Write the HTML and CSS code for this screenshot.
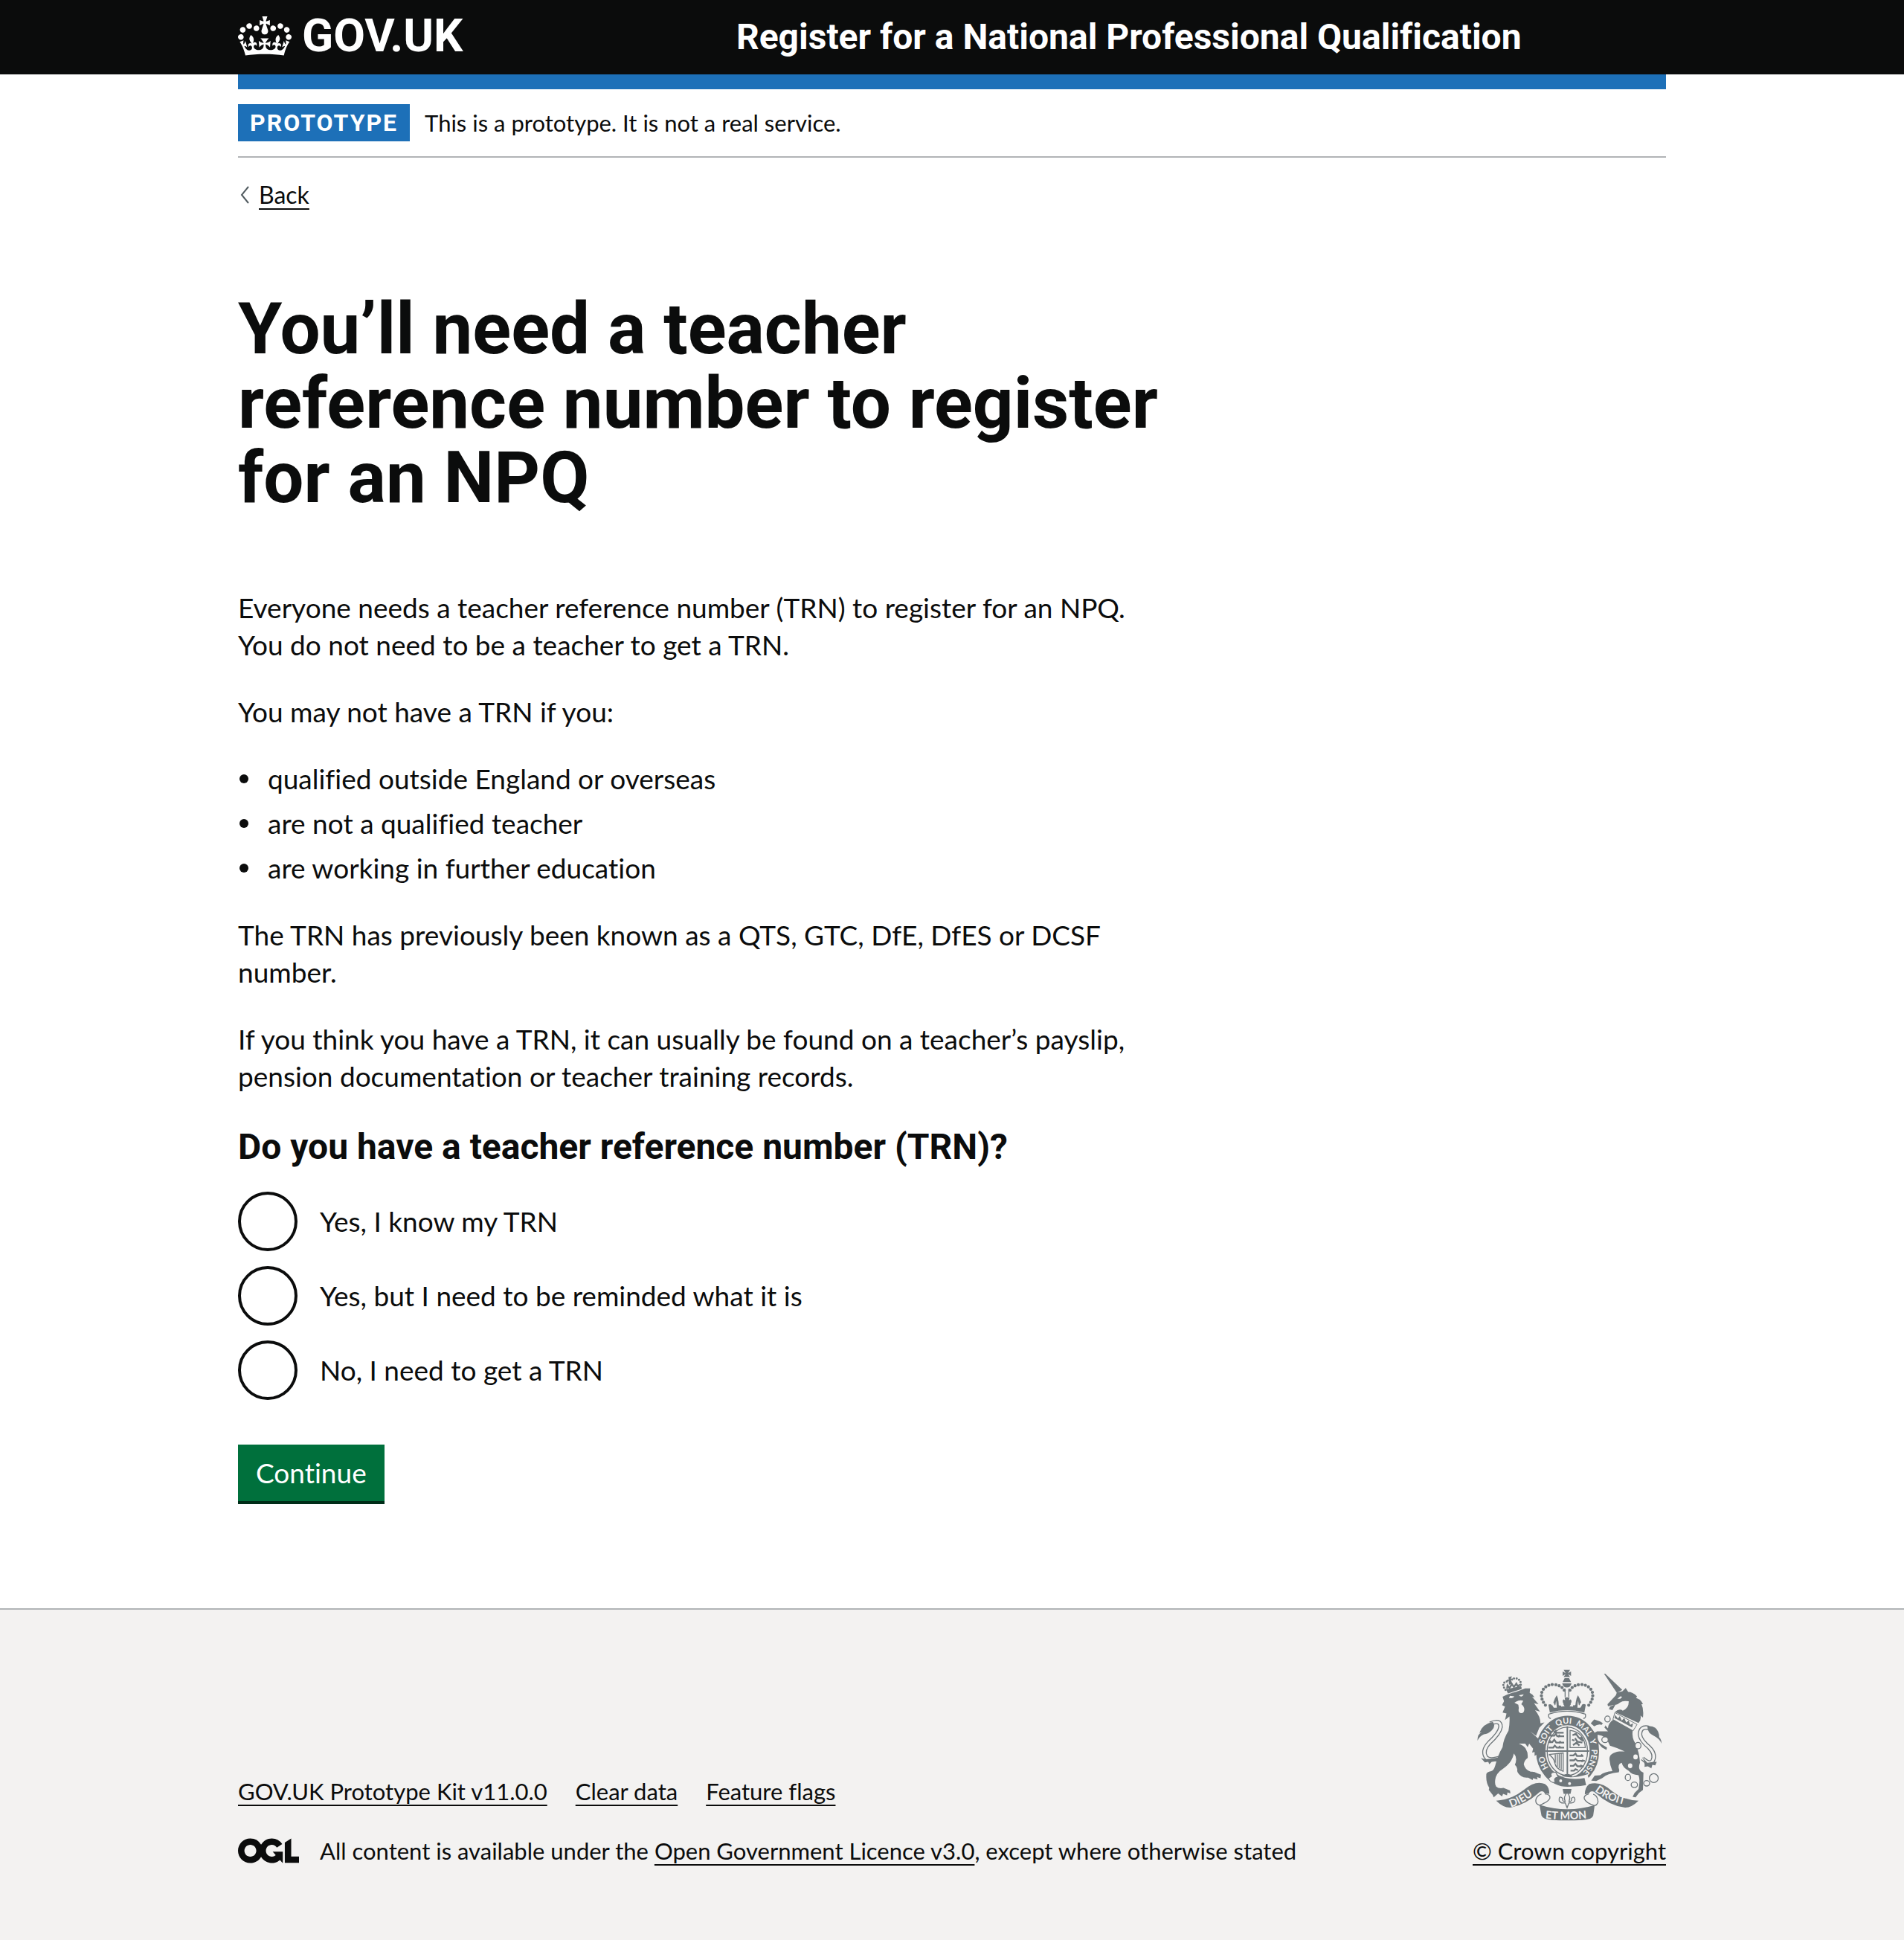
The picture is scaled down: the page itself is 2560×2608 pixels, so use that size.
FILE: index.html
```html
<!DOCTYPE html>
<html lang="en">
<head>
<meta charset="utf-8">
<title>Register for a National Professional Qualification</title>
<meta name="viewport" content="width=device-width, initial-scale=1">
<link rel="stylesheet" href="styles.css">
</head>
<body>
<header class="header">
  <div class="container header-inner">
    <a class="logo" href="#">
      <svg class="logo-crown" viewBox="0 0 132 97" aria-hidden="true"><path fill="currentColor" fill-rule="evenodd" d="M25 30.2c3.5 1.5 7.7-.2 9.1-3.7 1.5-3.6-.2-7.8-3.9-9.2-3.6-1.4-7.6.3-9.1 3.9-1.4 3.5.3 7.5 3.9 9zM9 39.5c3.6 1.5 7.8-.2 9.2-3.7 1.5-3.6-.2-7.8-3.9-9.1-3.6-1.5-7.6.2-9.1 3.8-1.4 3.5.3 7.5 3.8 9zM4.4 57.2c3.5 1.5 7.7-.2 9.1-3.8 1.5-3.6-.2-7.7-3.9-9.1-3.5-1.5-7.6.3-9.1 3.8-1.4 3.5.3 7.6 3.9 9.1zm38.3-21.4c3.5 1.5 7.7-.2 9.1-3.8 1.5-3.6-.2-7.7-3.9-9.1-3.6-1.5-7.6.3-9.1 3.8-1.3 3.6.4 7.7 3.9 9.1zm64.4-5.6c-3.6 1.5-7.8-.2-9.1-3.7-1.5-3.6.2-7.8 3.8-9.2 3.6-1.4 7.7.3 9.2 3.9 1.3 3.5-.4 7.5-3.9 9zm15.9 9.3c-3.6 1.5-7.7-.2-9.1-3.7-1.5-3.6.2-7.8 3.7-9.1 3.6-1.5 7.7.2 9.2 3.8 1.5 3.5-.3 7.5-3.8 9zm4.7 17.7c-3.6 1.5-7.8-.2-9.2-3.8-1.5-3.6.2-7.7 3.9-9.1 3.6-1.5 7.7.3 9.2 3.8 1.3 3.5-.4 7.6-3.9 9.1zM89.3 35.8c-3.6 1.5-7.8-.2-9.2-3.8-1.4-3.6.2-7.7 3.9-9.1 3.6-1.5 7.7.3 9.2 3.8 1.4 3.6-.3 7.7-3.9 9.1zM69.7 17.7l8.9 4.7V9.3l-8.9 2.8c-.2-.3-.5-.6-.9-.9L72.4 0H59.6l3.5 11.2c-.3.3-.6.5-.9.9l-8.8-2.8v13.1l8.8-4.7c.3.3.6.7.9.9l-5 15.4v.1c-.2.8-.4 1.6-.4 2.4 0 4.1 3.1 7.5 7 8.1h.2c.3 0 .7.1 1 .1.4 0 .7 0 1-.1h.2c4-.6 7.1-4.1 7.1-8.1 0-.8-.1-1.7-.4-2.4V34l-5.1-15.4c.4-.2.7-.6 1-.9zM66 92.8c16.9 0 32.8 1.1 47.1 3.2 4-16.9 8.9-26.7 14-33.5l-9.6-3.4c1 4.9 1.1 7.2 0 10.2-1.5-1.4-3-4.3-4.2-8.7L108.6 76c2.8-2 5-3.2 7.5-3.3-4.4 9.4-10 11.9-13.6 11.2-4.3-.8-6.3-4.6-5.6-7.9 1-4.7 5.7-5.9 8-.5 4.3-8.7-3-11.4-7.6-8.8 7.1-7.2 7.9-13.5 2.1-21.1-8 6.1-8.1 12.3-4.5 20.8-4.7-5.4-12.1-2.5-9.5 6.2 3.4-5.2 7.9-2 7.2 3.1-.6 4.3-6.4 7.8-13.5 7.2-10.3-.9-10.9-8-11.2-13.8 2.5-.5 7.1 1.8 11 7.3L80.2 60c-4.1 4.4-8 5.3-12.3 5.4 1.4-4.4 8-11.6 8-11.6H55.5s6.4 7.2 7.9 11.6c-4.2-.1-8-1-12.3-5.4l1.4 16.4c3.9-5.5 8.5-7.7 10.9-7.3-.3 5.8-.9 12.8-11.1 13.8-7.2.6-12.9-2.9-13.5-7.2-.7-5 3.8-8.3 7.1-3.1 2.7-8.7-4.6-11.6-9.4-6.2 3.7-8.5 3.6-14.7-4.6-20.8-5.8 7.6-5 13.9 2.2 21.1-4.7-2.6-11.9.1-7.7 8.8 2.3-5.5 7.1-4.2 8.1.5.7 3.3-1.3 7.1-5.7 7.9-3.5.7-9-1.8-13.5-11.2 2.5.1 4.7 1.3 7.5 3.3l-4.7-15.4c-1.2 4.4-2.7 7.2-4.3 8.7-1.1-3-.9-5.3 0-10.2l-9.5 3.4c5 6.9 9.9 16.7 14 33.5 14.8-2.1 30.8-3.2 47.7-3.2z"/></svg>
      <span>GOV.UK</span>
    </a>
    <a class="service-name" href="#">Register for a National Professional Qualification</a>
  </div>
</header>
<div class="container">
  <div class="blue-bar"></div>
  <div class="phase-banner">
    <strong class="tag">PROTOTYPE</strong>
    <span>This is a prototype. It is not a real service.</span>
  </div>
  <a class="back-link" href="#">
    <svg class="chevron" viewBox="0 0 12 24" aria-hidden="true"><path d="M11 1 2 12l9 11" fill="none" stroke="#505a5f" stroke-width="2"/></svg>
    <span class="underlined">Back</span>
  </a>
  <main class="main">
    <h1>You’ll need a teacher reference number to register for an NPQ</h1>
    <p>Everyone needs a teacher reference number (TRN) to register for an NPQ. You do not need to be a teacher to get a TRN.</p>
    <p>You may not have a TRN if you:</p>
    <ul class="bullets">
      <li>qualified outside England or overseas</li>
      <li>are not a qualified teacher</li>
      <li>are working in further education</li>
    </ul>
    <p>The TRN has previously been known as a QTS, GTC, DfE, DfES or DCSF number.</p>
    <p>If you think you have a TRN, it can usually be found on a teacher’s payslip, pension documentation or teacher training records.</p>
    <form>
      <fieldset>
        <legend>Do you have a teacher reference number (TRN)?</legend>
        <div class="radios">
          <div class="radio"><input type="radio" name="trn" id="trn-yes" value="yes"><label for="trn-yes">Yes, I know my TRN</label></div>
          <div class="radio"><input type="radio" name="trn" id="trn-reminder" value="reminder"><label for="trn-reminder">Yes, but I need to be reminded what it is</label></div>
          <div class="radio"><input type="radio" name="trn" id="trn-no" value="no"><label for="trn-no">No, I need to get a TRN</label></div>
        </div>
      </fieldset>
      <button class="button" type="button">Continue</button>
    </form>
  </main>
</div>
<footer class="footer">
  <div class="container footer-inner">
    <div class="footer-meta">
      <nav class="footer-links">
        <a class="underlined" href="#">GOV.UK Prototype Kit v11.0.0</a>
        <a class="underlined" href="#">Clear data</a>
        <a class="underlined" href="#">Feature flags</a>
      </nav>
      <div class="licence">
        <svg class="ogl" viewBox="0 0 483.2 195.7" aria-hidden="true"><path fill="currentColor" d="M421.5 142.8V.1l-50.7 32.3v161.1h112.4v-50.7zm-122.3-9.6A47.12 47.12 0 0 1 221 97.8c0-26 21.1-47.1 47.1-47.1 16.7 0 31.4 8.7 39.7 21.8l42.7-27.2A97.63 97.63 0 0 0 268.1 0c-36.5 0-68.3 20.1-85.1 49.7A98 98 0 0 0 97.8 0C43.9 0 0 43.9 0 97.8s43.9 97.8 97.8 97.8c36.5 0 68.3-20.1 85.1-49.7a97.76 97.76 0 0 0 149.6 25.4l19.4 22.2h3v-87.8h-80l24.3 27.5zM97.8 145c-26 0-47.1-21.1-47.1-47.1s21.1-47.1 47.1-47.1 47.1 21.1 47.1 47.1S123.8 145 97.8 145"/></svg>
        <span>All content is available under the <a class="underlined" href="#">Open Government Licence v3.0</a>, except where otherwise stated</span>
      </div>
    </div>
    <div class="copyright">
      <svg class="arms" viewBox="72 70 750 616" aria-hidden="true">
        <defs>
          <path id="garter" d="M440 513A97 111 0 0 1 440 291A97 111 0 0 1 440 513"/>
          <path id="motto-left" d="M210 630Q262 614 326 562"/>
          <path id="motto-mid" d="M340 674Q438 686 540 672"/>
          <path id="motto-right" d="M550 564Q606 610 694 624"/>
        </defs>
        <path class="tail" d="M126 291Q168 272 168 304Q164 330 122 368Q92 400 108 426Q120 444 172 428"/>
        <path class="tail-in" d="M126 291Q168 272 168 304Q164 330 122 368Q92 400 108 426Q120 444 172 428"/>
        <path class="tail" d="M770 308Q734 300 734 336Q736 358 772 388Q800 416 784 444Q772 458 744 432"/>
        <path class="tail-in" d="M770 308Q734 300 734 336Q736 358 772 388Q800 416 784 444Q772 458 744 432"/>
        <g class="arms-fill">
          <path d="M74 360Q74 332 92 326L82 328Q96 292 136 284Q150 300 132 318Q118 332 100 334Q82 342 74 360zM822 372Q820 346 804 342L812 346Q812 322 796 308Q780 298 764 302Q764 330 790 340Q812 350 822 372z"/>
          <path d="M88 430Q104 438 122 434L174 426L150 444L132 446L122 456L118 446L104 448zM742 426L764 450L790 446L802 446L796 460L784 458L780 472L766 464L752 466Q756 446 742 426z"/>
          <path d="M176 182Q200 168 230 162L268 148L288 148L286 166Q300 172 306 184L296 182L322 212L304 208L328 242L308 236Q330 262 330 290L346 286L325 308L312 340L288 322L330 360Q344 378 344 402Q348 420 336 426L330 414L324 430L316 416L306 422L306 406L296 408L300 392L284 372L278 386L268 372L242 372Q262 380 270 392Q280 408 278 430Q264 440 262 456Q268 480 290 486Q304 484 316 492L332 498L330 512L316 508L318 518L300 512L298 520L280 510Q262 512 252 504Q232 490 236 476Q232 462 226 458Q238 430 222 412Q214 450 180 472Q148 492 146 520Q144 540 150 546Q160 556 180 552L206 562L208 574L196 570L194 582L178 576L174 586L158 574L140 590L136 580L120 560L122 552Q108 530 110 500Q108 488 130 484Q140 482 146 462Q156 420 176 386Q180 352 200 320Q206 290 204 262L186 276L192 250L176 246L186 222L174 216L182 200z"/>
          <path d="M190 152L250 138L254 150L198 168zM200 102l14-3-4 10 7-2 1 9-8-2 6 16-14 3-1-16-7 5-1-10 8 1z"/>
          <path d="M588 88L593 88L662 154L640 166z"/>
          <path d="M602 212L636 176L640 164L662 160L676 146L686 162Q704 162 722 180L718 186Q738 192 746 212L740 212Q750 232 746 266L736 258Q740 276 728 288L632 244Q650 228 664 238Q690 228 688 200Q664 196 652 206Q640 216 634 214L622 236L608 232L612 222L630 214L604 220z"/>
          <path d="M626 274L704 318Q700 350 716 372Q732 410 734 450Q722 480 748 490L746 560L730 572L716 590L704 588L712 572L728 556Q736 520 728 500Q700 498 688 482Q664 470 660 450Q640 456 650 480L648 488Q600 492 580 512L556 524L536 522L550 502L572 500Q590 486 622 484Q612 460 610 436Q608 410 650 404L672 404Q640 388 612 380Q600 350 580 340L562 336Q560 360 574 372L600 388L598 398L580 388L566 372Q548 350 546 330L560 322L604 322L580 296Q564 290 548 302L534 290L548 274L566 280Q584 286 604 310Q604 290 626 274z"/>
          <path d="M424 72h26l-8 14 12-7v18l-12-7 8 12h-26l8-12-12 7v-18l12 7zM420 122l8-16h18l8 16zM418 127h38q-4 17-19 17t-19-17z"/>
          <path d="M362 214Q372 208 378 218Q386 190 396 176Q404 192 404 216Q412 222 424 212Q416 196 424 192L430 196L428 184H448L446 196L452 192Q460 198 452 212Q466 220 472 214Q474 190 482 176Q492 192 498 214Q506 208 514 214L508 246Q438 226 368 246z"/>
        </g>
        <path class="dots" d="M350 216C314 170 344 132 382 132Q416 134 428 158M526 216C562 170 532 132 494 132Q460 134 448 158"/>
        <path class="dots small" d="M188 154C168 128 186 116 204 120M248 144C258 112 232 100 212 112"/>
        <path class="squiggle" d="M194 150l2-14 8 10 10-16 8 12 10-14 6 12 8-8"/>
        <path class="line" d="M430 150v32M445 150v32M364 252Q438 228 512 252Q516 268 504 270M364 252Q360 268 372 270"/>
        <path class="light" d="M202 186q14 4 22-6l-18-2zM242 176q12 12 20-4zM224 206q20-14 36-8l-8 14q14 10 12 24t-14 12-8-20l-2-14zM642 190l12-10 8 2-8 8z"/>
        <path class="light" d="M384 226q-10-14-6-20t8 6 6-6 4 20zM492 226q10-14 6-20t-8 6-6-6-4 20zM414 222q-2-12 6-14l8 12zM462 222q2-12-6-14l-8 12z"/>
        <path class="line collar" d="M632 246L722 294L706 320L624 274z"/>
        <path class="fill-only" d="M634 256l10 14 8-10 8 18 10-10 8 18 10-8 6 18 12-6-4 16-72-38z"/>
        <ellipse class="garter" cx="440" cy="403" rx="109" ry="125"/>
        <ellipse class="line" cx="439" cy="403" rx="82" ry="98"/>
        <path class="line thick" d="M439 302V508M350 402H528"/>
        <path class="squiggle" d="M366 340h20l6-8 6 10h28M368 334l10 8M384 322l8 6h32M392 316v10M362 366h16l8-10 8 12h32M366 358l8 10M362 388h20l6-8 8 8h30M408 336l-6 10M412 362l-8 8M410 382l-8 8"/>
        <path class="squiggle" d="M448 420h16l8-8 6 10h26M448 440h18l6-6 8 8h30M450 462h14l8-8 8 10h26M452 482h14l6-6 10 4M500 416l-8 8M504 438l-8 8M496 458l-6 10"/>
        <path class="line" d="M450 318Q508 326 512 388H450z"/>
        <path class="squiggle" d="M460 338l14-6 10 14 14 12M470 350l10 14 20 4M462 378l14-10 12 12M494 344l8 18M458 356l10 4"/>
        <path class="line" d="M364 416l58-6v74Q392 474 388 450Q384 428 364 416M414 412v66M406 412v60M398 412v54M390 412v38"/>
        <path class="fill-only" d="M432 496h14l16 10-20 6-26-8z"/>
        <path class="belt-edge" d="M378 502Q440 536 524 508"/>
        <path class="belt" d="M378 504Q440 542 512 526"/>
        <path class="line ribbon" d="M392 488Q366 486 374 504L362 512Q370 532 390 530Q380 510 402 508z"/>
        <circle class="light" cx="412" cy="523" r="6"/><circle class="light" cx="448" cy="534" r="6"/>
        <path class="arms-fill" d="M150 604Q212 600 262 560Q310 520 348 536Q366 548 366 576L348 574Q338 556 318 576Q266 622 206 632Q178 632 150 604zM728 604Q664 600 622 566Q576 522 528 536Q510 550 510 578L526 574Q538 556 556 574Q610 624 674 632Q700 632 728 604zM326 620Q436 656 550 622L544 664Q540 680 500 682Q436 686 378 682Q340 680 334 664z"/>
        <path class="line ribbon" d="M348 576Q372 578 368 594Q362 606 344 614Q328 622 326 622Q306 616 312 596Q318 582 334 576M526 576Q504 582 508 596Q514 612 550 624Q568 616 562 598Q558 582 544 578"/>
        <path class="arms-fill" d="M420 556h36l-4 20h-28z"/>
        <path class="line ribbon" d="M438 570Q422 588 430 606Q418 608 420 594Q404 580 406 604Q412 616 430 612L438 632L446 612Q468 616 470 600Q468 582 456 594Q458 608 446 606Q454 588 438 570z"/>
        <g class="chain">
          <ellipse cx="602" cy="272" rx="11" ry="12"/><ellipse cx="592" cy="356" rx="13" ry="12"/><ellipse cx="726" cy="380" rx="12" ry="13"/><ellipse cx="685" cy="509" rx="11" ry="13"/><ellipse cx="711" cy="539" rx="13" ry="11"/><ellipse cx="761" cy="533" rx="12" ry="11"/><circle cx="790" cy="512" r="18"/>
        </g>
        <ellipse class="light" cx="586" cy="298" rx="7" ry="8"/><ellipse class="light" cx="716" cy="426" rx="9" ry="10"/><ellipse class="light" cx="694" cy="462" rx="9" ry="10"/>
        <g class="motto">
          <text><textPath href="#garter" startOffset="14%">HO</textPath></text>
          <text><textPath href="#garter" startOffset="29%">SOIT</textPath></text>
          <text><textPath href="#garter" startOffset="43%">QUI</textPath></text>
          <text><textPath href="#garter" startOffset="55%">MAL</textPath></text>
          <text><textPath href="#garter" startOffset="68%">Y</textPath></text>
          <text><textPath href="#garter" startOffset="74%">PENSE</textPath></text>
          <text class="motto-large"><textPath href="#motto-left">DIEU</textPath></text>
          <text class="motto-large"><textPath href="#motto-mid" startOffset="5%">ET MON</textPath></text>
          <text class="motto-large"><textPath href="#motto-right">DROIT</textPath></text>
        </g>
      </svg>
      <a class="underlined" href="#">© Crown copyright</a>
    </div>
  </div>
</footer>
</body>
</html>
```
FILE: styles.css
```css
* { box-sizing: border-box; }

body {
  margin: 0;
  background: #fff;
  color: #0b0c0c;
  font-family: Lato, "Liberation Sans", sans-serif;
  font-size: 37px;
  line-height: 50px;
  font-variant-ligatures: none;
}

a { color: inherit; text-decoration: none; }
svg { display: block; flex: none; }

.container { width: 75%; margin: 0 auto; }

.logo, .service-name, .tag, h1, legend {
  font-family: Roboto, "Liberation Sans", sans-serif;
  font-weight: 700;
}

.header { background: #0b0c0c; color: #fff; }
.header-inner { display: flex; align-items: center; height: 100px; }
.logo {
  display: flex;
  align-items: center;
  gap: 14px;
  flex: 0 0 33.33%;
  margin-right: 30px;
  padding-bottom: 4px;
  font-size: 62px;
}
.logo-crown { width: 72px; height: 53px; }
.service-name { font-size: 48px; white-space: nowrap; }

.blue-bar { height: 20px; background: #1d70b8; }
.phase-banner {
  display: flex;
  align-items: center;
  gap: 20px;
  padding: 20px 0;
  border-bottom: 2px solid #b1b4b6;
  font-size: 31px;
}
.tag {
  padding: 0 16px;
  background: #1d70b8;
  color: #fff;
  font-size: 32px;
  letter-spacing: 2px;
}

.underlined {
  text-decoration: underline;
  text-decoration-thickness: 2px;
  text-underline-offset: 6px;
  text-decoration-skip-ink: none;
}

.back-link {
  display: flex;
  align-items: center;
  gap: 13px;
  width: fit-content;
  margin-top: 30px;
  padding-left: 3px;
  font-size: 32px;
  line-height: 40px;
}
.chevron { width: 12px; height: 24px; }

.main { max-width: 1260px; padding: 110px 0 140px; }
h1 { margin: 0 0 100px; font-size: 96px; line-height: 100px; }
p { margin: 0 0 40px; max-width: 1240px; }

.bullets { margin: 0 0 40px; padding: 0; display: grid; gap: 10px; list-style: none; }
.bullets li { display: flex; align-items: center; gap: 26px; padding-left: 2px; }
.bullets li::before {
  content: "";
  width: 12px;
  height: 12px;
  border-radius: 50%;
  background: #0b0c0c;
}

fieldset { margin: 0; padding: 0; border: 0; }
legend { padding: 0; margin-bottom: 30px; font-size: 48px; line-height: 60px; }
.radios { display: grid; gap: 20px; margin-bottom: 60px; }
.radio { display: flex; align-items: center; gap: 30px; }
.radio input {
  appearance: none;
  flex: none;
  width: 80px;
  height: 80px;
  margin: 0;
  border: 4px solid #0b0c0c;
  border-radius: 50%;
  background: #fff;
}
.radio input:checked { box-shadow: inset 0 0 0 16px #fff; background: #0b0c0c; }

.button {
  display: block;
  height: 80px;
  padding: 0 24px;
  border: 0;
  border-bottom: 4px solid #002d18;
  background: #00703c;
  color: #fff;
  font: inherit;
  font-variant-ligatures: none;
}

.footer { border-top: 2px solid #b1b4b6; background: #f3f2f1; font-size: 31px; line-height: 40px; }
.footer-inner {
  display: flex;
  justify-content: space-between;
  align-items: flex-end;
  padding: 80px 0 100px;
}
.footer-meta { display: grid; gap: 40px; }
.footer-links { display: flex; gap: 38px; }
.licence { display: flex; align-items: center; gap: 28px; }
.ogl { width: 82px; height: 34px; }
.copyright { display: grid; gap: 20px; justify-items: center; }
.arms { width: 250px; height: 204px; }

.arms-fill, .fill-only { fill: #6f777b; }
.light { fill: #f3f2f1; }
.tail { fill: none; stroke: #6f777b; stroke-width: 18; }
.tail-in { fill: none; stroke: #f3f2f1; stroke-width: 10; }
.line { fill: none; stroke: #6f777b; stroke-width: 4; }
.thick { stroke-width: 6; }
.collar { fill: #f3f2f1; stroke-width: 3; }
.ribbon { fill: #f3f2f1; }
.garter { fill: #f3f2f1; stroke: #6f777b; stroke-width: 38; }
.belt-edge { fill: none; stroke: #f3f2f1; stroke-width: 24; }
.belt { fill: none; stroke: #6f777b; stroke-width: 30; }
.squiggle { fill: none; stroke: #6f777b; stroke-width: 7; }
.chain { fill: #f3f2f1; stroke: #6f777b; stroke-width: 4; }
.dots { fill: none; stroke: #6f777b; stroke-width: 13; stroke-linecap: round; stroke-dasharray: 0 14; }
.small { stroke-width: 9; stroke-dasharray: 0 11; }
.motto { fill: #f3f2f1; font-family: Lato, sans-serif; font-weight: 700; font-size: 33px; }
.motto-large { font-size: 43px; }
```
